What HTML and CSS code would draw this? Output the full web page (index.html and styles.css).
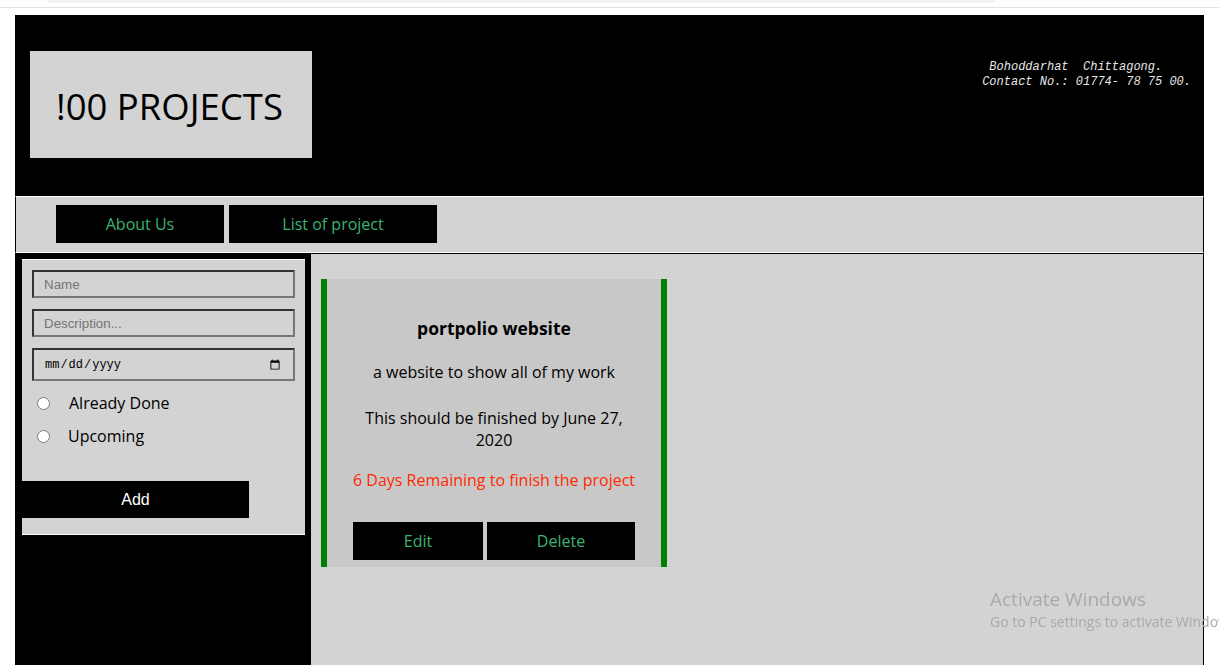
FILE: index.html
```html
<!DOCTYPE html>
<html lang="en">
<head>
<meta charset="utf-8">
<title>!00 PROJECTS</title>
<link rel="stylesheet" href="styles.css">
</head>
<body>
<div class="chrome"><div class="chrome-bar"></div></div>
<div class="page">
  <header class="header">
    <div class="logo">!00 PROJECTS</div>
    <div class="address"> Bohoddarhat  Chittagong.
Contact No.: 01774- 78 75 00.</div>
  </header>
  <nav class="nav">
    <a class="nav-btn nav-about" href="#">About Us</a>
    <a class="nav-btn nav-list" href="#">List of project</a>
  </nav>
  <main class="main">
    <aside class="sidebar">
      <form class="form">
        <div class="fields">
          <input class="field" type="text" placeholder="Name">
          <input class="field" type="text" placeholder="Description...">
          <input class="field field-date" type="date">
          <label class="radio-row radio-first"><input type="radio" name="status"><span>Already Done</span></label>
          <label class="radio-row"><input type="radio" name="status"><span>Upcoming</span></label>
        </div>
        <button class="add-btn" type="button">Add</button>
      </form>
    </aside>
    <section class="content">
      <div class="card">
        <h3 class="card-title">portpolio website</h3>
        <p class="card-desc">a website to show all of my work</p>
        <p class="card-date">This should be finished by June 27,<br>2020</p>
        <p class="card-remaining">6 Days Remaining to finish the project</p>
        <div class="card-actions">
          <button class="card-btn card-edit" type="button">Edit</button>
          <button class="card-btn card-delete" type="button">Delete</button>
        </div>
      </div>
    </section>
  </main>
</div>
<div class="watermark">
  <div class="wm-title">Activate Windows</div>
  <div class="wm-sub">Go to PC settings to activate Windows.</div>
</div>
</body>
</html>
```
FILE: styles.css
```css
html, body {
  margin: 0;
  padding: 0;
  height: 100%;
  overflow: hidden;
  background: #fff;
}

body {
  font-family: "Comic Sans MS", "Open Sans", sans-serif;
  color: #000;
}

.chrome {
  height: 7px;
  border-bottom: 1px solid #dfe1e5;
}

.chrome-bar {
  margin-left: 48px;
  width: 947px;
  height: 3px;
  background: #f1f3f4;
  border-radius: 0 0 8px 8px;
}

.page {
  margin: 7px 15px 0 15px;
  height: calc(100vh - 15px);
  display: flex;
  flex-direction: column;
}

/* header */
.header {
  height: 181px;
  flex: none;
  background: #000;
  display: flex;
  justify-content: space-between;
  align-items: flex-start;
  padding: 36px 13px 0 15px;
  box-sizing: border-box;
}

.logo {
  width: 282px;
  height: 107px;
  background: #d3d3d3;
  display: flex;
  align-items: center;
  padding-left: 26px;
  padding-top: 3px;
  box-sizing: border-box;
  font-size: 36.5px;
  font-weight: 500;
  color: #000;
}

.address {
  margin-top: 9px;
  white-space: pre;
  font-family: "Liberation Mono", "DejaVu Sans Mono", monospace;
  font-style: italic;
  font-size: 12px;
  line-height: 15px;
  color: #e6e6e6;
}

/* nav */
.nav {
  flex: none;
  height: 57px;
  box-sizing: border-box;
  background: #d3d3d3;
  border-top: 1px solid #fff;
  border-bottom: 1px solid #fff;
  border-left: 1px solid #000;
  border-right: 1px solid #000;
  padding: 8px 0 0 40px;
  display: flex;
  gap: 5px;
  align-items: flex-start;
}

.nav-btn {
  height: 38px;
  background: #000;
  color: #3cb371;
  text-decoration: none;
  font-size: 16px;
  display: flex;
  align-items: center;
  justify-content: center;
  padding-bottom: 1px;
  box-sizing: border-box;
}

.nav-about { width: 168px; }
.nav-list { width: 208px; }

/* main */
.main {
  flex: 1;
  display: flex;
  border-top: 1px solid #000;
  min-height: 0;
}

.sidebar {
  width: 296px;
  flex: none;
  background: #000;
  padding: 5px 6px 0 7px;
  box-sizing: border-box;
}

.form {
  margin: 0;
  background: #d3d3d3;
  border-top: 1px solid #fff;
  border-bottom: 1px solid #fff;
  padding: 10px 0 16px 0;
}

.fields {
  padding: 0 10px;
  display: flex;
  flex-direction: column;
}

.field {
  height: 28px;
  width: 263px;
  box-sizing: border-box;
  margin: 0 0 11px 0;
  background: transparent;
  border: 2px solid;
  border-color: #333 #767676 #767676 #333;
  padding: 1px 10px;
  font-family: "Liberation Sans", Arial, sans-serif;
  font-size: 13.33px;
  color: #000;
}

.field::placeholder {
  color: #757575;
}

.field-date {
  height: 33px;
  padding: 1px 10px 1px 10px;
  font-family: "Liberation Mono", monospace;
  font-size: 12px;
}

.radio-row {
  display: flex;
  align-items: center;
  height: 22px;
  margin-bottom: 11px;
  font-size: 16px;
}

.radio-row input {
  margin: 0 0 0 5px;
  width: 13px;
  height: 13px;
}

.radio-row span {
  margin-left: 19px;
}

.radio-row + .radio-row span {
  margin-left: 18px;
}

.add-btn {
  display: block;
  margin-top: 23px;
  width: 227px;
  height: 37px;
  background: #000;
  color: #fff;
  border: none;
  font-family: "Liberation Sans", Arial, sans-serif;
  font-size: 16px;
  padding: 0;
}

/* content */
.content {
  flex: 1;
  background: #d3d3d3;
  border-right: 1px solid #000;
  padding: 25px 10px 0 10px;
}

.card {
  width: 346px;
  box-sizing: border-box;
  background: #c8c8c8;
  border-left: 6px solid #008000;
  border-right: 6px solid #008000;
  padding: 37px 8px 7px 8px;
  text-align: center;
}

.card-title {
  margin: 0;
  font-size: 17.5px;
  font-weight: bold;
  line-height: 24px;
}

.card-desc {
  margin: 21px 0 0 0;
  font-size: 16px;
  line-height: 22px;
}

.card-date {
  margin: 24px 0 0 0;
  font-size: 16px;
  line-height: 22px;
}

.card-remaining {
  margin: 18px 0 0 0;
  font-size: 16px;
  line-height: 22px;
  color: #ff2a00;
  white-space: nowrap;
}

.card-actions {
  margin-top: 31px;
  display: flex;
  gap: 4px;
  justify-content: center;
}

.card-btn {
  height: 38px;
  background: #000;
  color: #3cb371;
  border: none;
  font-family: "Comic Sans MS", "Open Sans", sans-serif;
  font-size: 16px;
  padding: 0;
}

.card-edit { width: 130px; }
.card-delete { width: 148px; }

/* watermark overlay */
.watermark {
  position: fixed;
  left: 990px;
  right: 0;
  top: 586px;
  overflow: hidden;
  white-space: nowrap;
  font-family: "Open Sans", "Noto Sans", sans-serif;
  color: #a9a9a9;
  pointer-events: none;
}

.wm-title {
  font-size: 19px;
  line-height: 26px;
}

.wm-sub {
  font-size: 14px;
  line-height: 20px;
}
```
